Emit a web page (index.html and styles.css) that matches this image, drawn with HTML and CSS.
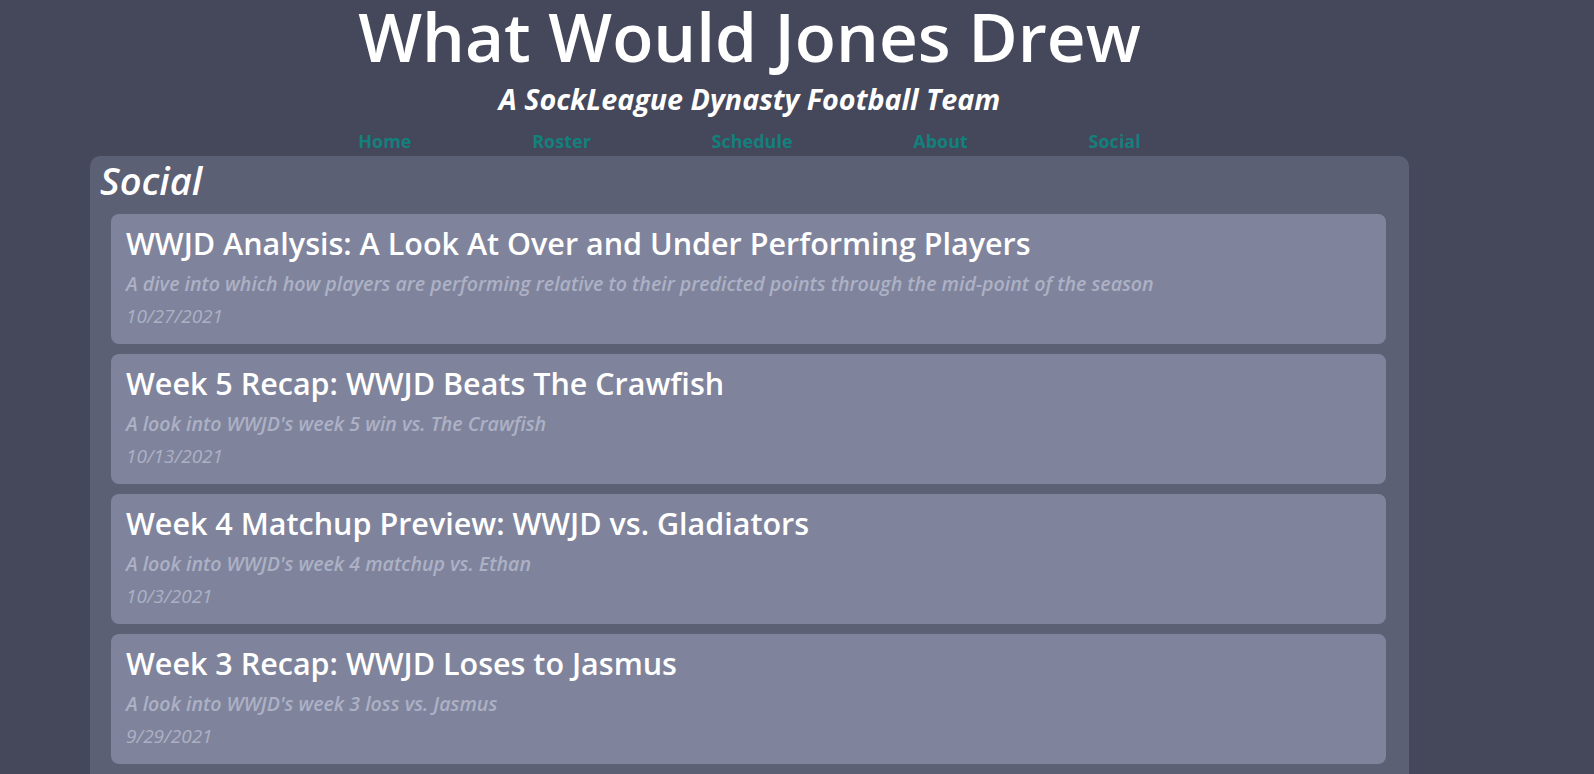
FILE: index.html
```html
<!DOCTYPE html>
<html lang="en">
<head>
<meta charset="utf-8">
<title>What Would Jones Drew</title>
<link rel="stylesheet" href="styles.css">
</head>
<body>
<div class="page">
  <header class="masthead">
    <div class="masthead-inner">
      <h1 class="site-title">What Would Jones Drew</h1>
      <h2 class="site-subtitle">A SockLeague Dynasty Football Team</h2>
      <nav class="site-nav">
        <a href="#">Home</a>
        <a href="#">Roster</a>
        <a href="#">Schedule</a>
        <a href="#">About</a>
        <a href="#">Social</a>
      </nav>
    </div>
  </header>
  <main class="panel">
    <h2 class="panel-title">Social</h2>
    <div class="posts">
      <article class="post">
        <h3 class="post-title">WWJD Analysis: A Look At Over and Under Performing Players</h3>
        <p class="post-desc">A dive into which how players are performing relative to their predicted points through the mid-point of the season</p>
        <p class="post-date">10/27/2021</p>
      </article>
      <article class="post">
        <h3 class="post-title">Week 5 Recap: WWJD Beats The Crawfish</h3>
        <p class="post-desc">A look into WWJD's week 5 win vs. The Crawfish</p>
        <p class="post-date">10/13/2021</p>
      </article>
      <article class="post">
        <h3 class="post-title">Week 4 Matchup Preview: WWJD vs. Gladiators</h3>
        <p class="post-desc">A look into WWJD's week 4 matchup vs. Ethan</p>
        <p class="post-date">10/3/2021</p>
      </article>
      <article class="post">
        <h3 class="post-title">Week 3 Recap: WWJD Loses to Jasmus</h3>
        <p class="post-desc">A look into WWJD's week 3 loss vs. Jasmus</p>
        <p class="post-date">9/29/2021</p>
      </article>
    </div>
  </main>
</div>
</body>
</html>
```
FILE: styles.css
```css
html, body {
  margin: 0;
  padding: 0;
}
body {
  background: #45475a;
  color: #ffffff;
  font-family: "Open Sans", "Noto Sans", sans-serif;
}
.page {
  margin-left: 90px;
  width: 1319px;
}
.masthead {
  display: flex;
  justify-content: center;
}
.masthead-inner {
  display: flex;
  flex-direction: column;
  align-items: stretch;
}
.site-title {
  margin: 0;
  font-size: 67.5px;
  font-weight: 600;
  line-height: 72px;
  text-align: center;
  white-space: nowrap;
}
.site-subtitle {
  margin: 9px 0 0;
  font-size: 28.7px;
  font-style: italic;
  font-weight: 700;
  line-height: 36px;
  text-align: center;
}
.site-nav {
  margin-top: 13px;
  display: flex;
  justify-content: space-between;
}
.site-nav a {
  color: #14807d;
  font-size: 18px;
  font-weight: 700;
  line-height: 22px;
  text-decoration: none;
}
.panel {
  margin-top: 4px;
  background: #5c6075;
  border-radius: 10px 10px 0 0;
  padding: 1px 23px 10px 21px;
}
.panel-title {
  margin: 0 0 11px -11px;
  font-size: 38px;
  font-style: italic;
  font-weight: 600;
  line-height: 46px;
}
.posts {
  display: flex;
  flex-direction: column;
  gap: 10px;
}
.post {
  background: #7f849c;
  border-radius: 8px;
  padding: 11px 15px 12px;
  height: 130px;
  box-sizing: border-box;
}
.post-title {
  margin: 0 0 7px;
  font-size: 30.5px;
  font-weight: 600;
  line-height: 36px;
}
.post-desc,
.post-date {
  margin: 0;
  font-size: 19.6px;
  font-style: italic;
  line-height: 32px;
  color: #adb1c5;
}
.post-desc {
  font-weight: 600;
}
.post-date {
  font-size: 19px;
  font-weight: 400;
}
```
